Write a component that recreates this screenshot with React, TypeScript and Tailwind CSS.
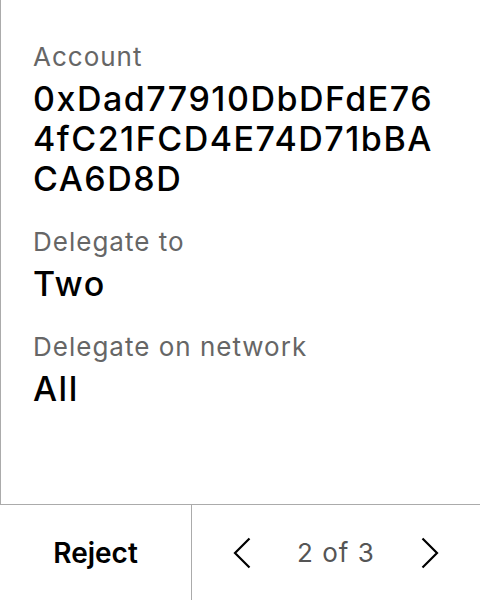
const fields = [
  { label: "Account", value: "0xDad77910DbDFdE764fC21FCD4E74D71bBACA6D8D" },
  { label: "Delegate to", value: "Two" },
  { label: "Delegate on network", value: "All" },
]

function Chevron({ dir }: { dir: "left" | "right" }) {
  return (
    <svg width="18" height="32" viewBox="0 0 18 32" fill="none" stroke="currentColor" strokeWidth={2.2}>
      {dir === "left" ? <path d="M16.5 1.5 L2 16 L16.5 30.5" /> : <path d="M1.5 1.5 L16 16 L1.5 30.5" />}
    </svg>
  )
}

export default function App() {
  return (
    <div className="flex h-[600px] w-[480px] flex-col bg-white font-['Inter',sans-serif] text-black">
      {/* Details */}
      <div className="flex flex-1 flex-col gap-[27px] border-l border-[#ababab] pl-8 pr-8 pt-[41px]">
        {fields.map((f) => (
          <div key={f.label} className="flex flex-col gap-[6px]">
            <span className="text-[26px] leading-8 tracking-[1px] text-[#666666]">{f.label}</span>
            <span className="break-all text-[34px] font-medium leading-10 tracking-[1.5px]">{f.value}</span>
          </div>
        ))}
      </div>

      {/* Footer */}
      <div className="flex h-24 border-t border-[#ababab]">
        <button className="flex w-[192px] items-center justify-center border-r border-[#ababab] text-[28px] font-semibold">
          Reject
        </button>
        <div className="flex flex-1 items-center justify-between px-[41px]">
          <Chevron dir="left" />
          <span className="text-[26px] tracking-[1px] text-[#555555]">2 of 3</span>
          <Chevron dir="right" />
        </div>
      </div>
    </div>
  )
}
